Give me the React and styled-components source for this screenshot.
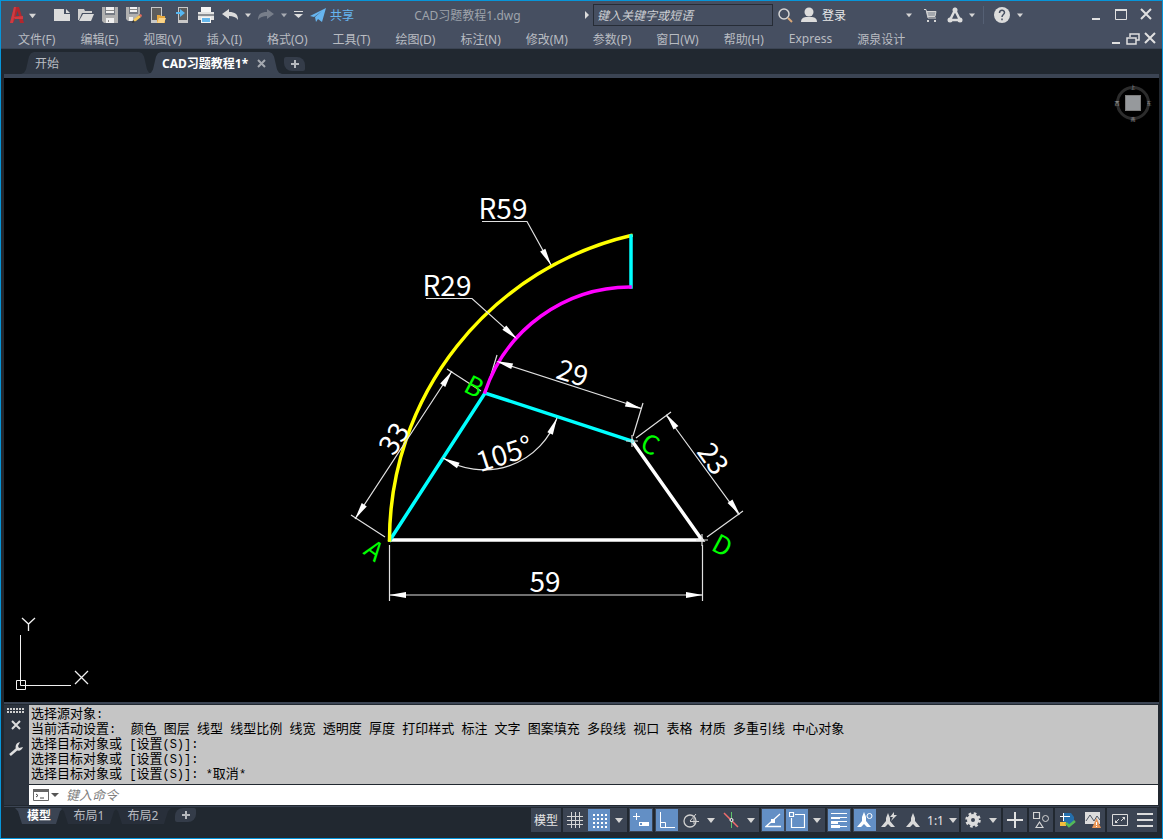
/* eslint-disable react/prop-types */
import { useState } from "react";
import styled, { createGlobalStyle, css } from "styled-components";

const GlobalStyle = createGlobalStyle`
  * {
    box-sizing: border-box;
  }

  body {
    margin: 0;
    background-color: #212830;
    font-family: "Noto Sans", "Noto Sans CJK SC", sans-serif;
    font-size: 12px;
    color: #c3c6cb;
  }

  button,
  input {
    font-family: inherit;
    font-size: inherit;
    font-weight: inherit;
    color: inherit;
  }

  button {
    padding: 0;
    border: none;
    background: none;
    white-space: nowrap;
    cursor: pointer;
  }

  svg {
    display: block;
    flex-shrink: 0;
  }
`;

const Window = styled.div`
  display: flex;
  flex-direction: column;
  min-height: 100vh;
  border: 1px solid #0795d9;
  background-color: #212830;
`;

const TitleBar = styled.header`
  display: flex;
  align-items: center;
  height: 28px;
  padding: 0 4px 0 6px;
  background-color: #464f61;
`;

const ToolButton = styled.button`
  display: flex;
  align-items: center;
  justify-content: center;
  flex-shrink: 0;
  width: ${(props) => props.$width || 24}px;
  height: 24px;
`;

const ShareButton = styled.button`
  display: flex;
  align-items: center;
  gap: 4px;
  margin-left: 4px;
  color: #66b5f0;
`;

const DocumentTitle = styled.div`
  flex: 1;
  color: #9ea3ab;
  font-size: 12px;
  text-align: center;
  white-space: nowrap;
`;

const SearchInput = styled.input`
  width: 180px;
  height: 22px;
  padding: 0 3px;
  border: 1px solid #262c36;
  background-color: #464f61;
  font-style: italic;

  &::placeholder {
    color: #cdd0d4;
    opacity: 1;
  }
`;

const SignInButton = styled.button`
  display: flex;
  align-items: center;
  gap: 5px;
  width: 100px;
  margin-left: 4px;
  color: #e8e8e8;
`;

const Divider = styled.span`
  width: 1px;
  height: 18px;
  margin: 0 6px;
  background-color: #556074;
`;

const WindowButtons = styled.div`
  display: flex;
  align-items: center;
  margin-left: ${(props) => props.$push || "auto"};
`;

const MenuBar = styled.nav`
  display: flex;
  align-items: center;
  gap: 25px;
  height: 20px;
  padding: 0 4px 0 17px;
  border-bottom: 1px solid #3b4453;
  background-color: #464f61;
  color: #b9bcc2;
`;

const Body = styled.main`
  display: flex;
  flex: 1;
  flex-direction: column;
  padding: 0 3px;
`;

const FileTabs = styled.div`
  display: flex;
  align-items: flex-end;
  height: 29px;
  padding-left: 17px;
  border-bottom: 4px solid #3b4453;
`;

const tabShape = css`
  clip-path: polygon(
    0 100%,
    3px 94%,
    5px 80%,
    8px 20%,
    10px 6%,
    13px 0,
    calc(100% - 13px) 0,
    calc(100% - 10px) 6%,
    calc(100% - 8px) 20%,
    calc(100% - 5px) 80%,
    calc(100% - 3px) 94%,
    100% 100%
  );
`;

const FileTab = styled.div`
  display: flex;
  align-items: center;
  gap: 9px;
  width: ${(props) => props.$width}px;
  height: 22px;
  padding-left: 14px;
  margin-right: -4px;
  background-color: ${(props) => (props.$active ? "#3b4453" : "#2f3743")};
  color: ${(props) => (props.$active ? "#ffffff" : "#b9bcc2")};
  font-weight: ${(props) => (props.$active ? 700 : 400)};
  ${tabShape}
`;

const AddTab = styled.button`
  display: flex;
  align-items: center;
  justify-content: center;
  width: 21px;
  height: 14px;
  margin: ${(props) => props.$margin};
  border-radius: ${(props) => props.$radius};
  background-color: #343c49;
`;

const Canvas = styled.section`
  position: relative;
  flex: 1;
  min-height: 500px;
  background-color: #000000;
`;

const Drawing = styled.svg`
  position: absolute;
  inset: 0;
  width: 100%;
  height: 100%;
`;

const CoordinateIcon = styled.svg`
  position: absolute;
  left: 8px;
  bottom: 8px;
`;

const Compass = styled.svg`
  position: absolute;
  top: 3px;
  right: 4px;
`;

const CommandPanel = styled.section`
  display: flex;
  padding: 1px 1px 0 0;
  border-top: 2px solid #3b4453;
`;

const CommandGutter = styled.div`
  display: flex;
  flex-direction: column;
  align-items: center;
  width: 25px;
  padding: 3px 2px 0 0;
  background-color: #2c333e;
`;

const CommandBody = styled.div`
  flex: 1;
`;

const CommandLog = styled.div`
  padding: 2px;
  background-color: #c5c5c5;
  color: #000000;
`;

const LogRow = styled.p`
  height: 15px;
  margin: 0;
  font-family: "Liberation Mono", "Noto Sans CJK SC", monospace;
  font-size: 12px;
  line-height: 15px;
  white-space: pre;
`;

const Han = styled.span`
  font-size: 13px;
  line-height: 15px;
`;

const CommandLine = styled.div`
  display: flex;
  align-items: center;
  height: 20px;
  margin-top: 1px;
  padding-left: 4px;
  background-color: #ffffff;
`;

const CommandInput = styled.input`
  flex: 1;
  height: 20px;
  padding: 0 7px;
  border: none;
  background: none;
  color: #000000;
  font-size: 13px;
  font-style: italic;

  &::placeholder {
    color: #808080;
    opacity: 1;
  }
`;

const StatusBar = styled.footer`
  display: flex;
  align-items: flex-start;
  justify-content: space-between;
  margin-top: 1px;
  padding: 1px 2px 6px 11px;
  border-top: 1px solid #3b4453;
`;

const LayoutTabs = styled.div`
  display: flex;
  align-items: flex-start;
`;

const LayoutTab = styled.button`
  width: ${(props) => (props.$active ? 48 : 56)}px;
  height: 16px;
  margin-right: -2px;
  border-radius: 0 0 6px 6px;
  background-color: ${(props) => (props.$active ? "#3b4453" : "#282f3a")};
  color: ${(props) => (props.$active ? "#ffffff" : "#b9bcc2")};
  font-weight: ${(props) => (props.$active ? 700 : 400)};
  line-height: 16px;
  clip-path: polygon(
    0 0,
    100% 0,
    calc(100% - 3px) 20%,
    calc(100% - 7px) 100%,
    7px 100%,
    3px 20%
  );
`;

const StatusTools = styled.div`
  display: flex;
  gap: 2px;
`;

const StatusGroup = styled.div`
  display: flex;
  align-items: center;
  height: 24px;
  background-color: #3b4453;
`;

const StatusButton = styled.button`
  display: flex;
  align-items: center;
  justify-content: center;
  gap: 5px;
  width: ${(props) => props.$width || 24}px;
  height: 24px;
  border: 1px solid #3b4453;
  background-color: ${(props) => (props.$on ? "#638fc5" : "#3b4453")};
  color: #e6e6e6;
`;

const menus = [
  "文件(F)",
  "编辑(E)",
  "视图(V)",
  "插入(I)",
  "格式(O)",
  "工具(T)",
  "绘图(D)",
  "标注(N)",
  "修改(M)",
  "参数(P)",
  "窗口(W)",
  "帮助(H)",
  "Express",
  "源泉设计",
];

const logLines = [
  "选择源对象:",
  "当前活动设置:  颜色 图层 线型 线型比例 线宽 透明度 厚度 打印样式 标注 文字 图案填充 多段线 视口 表格 材质 多重引线 中心对象",
  "选择目标对象或 [设置(S)]:",
  "选择目标对象或 [设置(S)]:",
  "选择目标对象或 [设置(S)]: *取消*",
];

function App() {
  return (
    <>
      <GlobalStyle />
      <Window>
        <Title />
        <Menu />
        <Body>
          <Files />
          <Canvas>
            <Quadrilateral />
            <Ucs />
            <ViewCompass />
          </Canvas>
          <Command />
          <Status />
        </Body>
      </Window>
    </>
  );
}

function Icon({ size = 16, children }) {
  return (
    <svg width={size} height={size} viewBox={`0 0 ${size} ${size}`} fill="none">
      {children}
    </svg>
  );
}

function Caret({ size = 6, color = "#d5d5d5" }) {
  return (
    <svg width={size} height={size} viewBox="0 0 8 8">
      <path d="M0 2h8L4 7z" fill={color} />
    </svg>
  );
}

function PlusIcon() {
  return (
    <svg width="8" height="8" viewBox="0 0 8 8">
      <path d="M4 0v8M0 4h8" stroke="#b5b8bd" strokeWidth="2" />
    </svg>
  );
}

function Title() {
  const [query, setQuery] = useState("");

  return (
    <TitleBar>
      <ToolButton aria-label="应用程序菜单" $width={19}>
        <Icon size={18}>
          <path
            d="M2 17L6 1h5l5 16h-4l-1-4H7l-2 4zM8 10h3L9.500 5z"
            fill="#b3272d"
            fillRule="evenodd"
          />
          <path d="M2 17L6 1h2L5 17zM5 11l10-1v3H7z" fill="#cf3b41" />
        </Icon>
      </ToolButton>
      <ToolButton aria-label="展开应用程序菜单" $width={12}>
        <Caret size={7} />
      </ToolButton>
      <ToolButton aria-label="新建" $width={36}>
        <svg width="16" height="16" viewBox="-6 0 16 16" overflow="visible">
          <path d="M0 2h10v5h6v7H0z" fill="#dcdcdc" />
          <path d="M12 2l4 4h-4z" fill="#dcdcdc" />
        </svg>
      </ToolButton>
      <ToolButton aria-label="打开">
        <Icon>
          <path d="M0 2h6l1 2h7v2H4L1 13H0z" fill="#d0d0d0" />
          <path d="M5 7h11l-3 7H1z" fill="#dcdcdc" />
        </Icon>
      </ToolButton>
      <ToolButton aria-label="保存">
        <Icon>
          <path d="M0 0h16v16H2l-2-2z" fill="#b0b0b0" />
          <path d="M3 0h10v8H3z" fill="#767b84" />
          <path d="M4 0h8v6H4zM4 11h8v5H4z" fill="#f0f0f0" />
          <path d="M4 3h8v1H4zM6 13h1v2H6z" fill="#8a8a8a" />
        </Icon>
      </ToolButton>
      <ToolButton aria-label="另存为">
        <Icon>
          <path d="M0 0h14v7l-7 7H2l-2-2z" fill="#b0b0b0" />
          <path d="M3 0h9v7H3z" fill="#767b84" />
          <path d="M4 0h7v5H4zM3 10h4v4H3z" fill="#f0f0f0" />
          <path d="M4 2h7v1H4z" fill="#8a8a8a" />
          <path d="M7 15l1-3 5-4 2 2-5 4z" fill="#f7c95b" />
          <path d="M13 8l2-1 1 2-1 1z" fill="#ee6b5d" />
          <path d="M6 16l1-3 2 2z" fill="#333" />
        </Icon>
      </ToolButton>
      <ToolButton aria-label="从移动设备打开">
        <Icon>
          <path d="M1 0h11v16H1z" fill="#c8c8c8" />
          <path d="M2 1h9v12H2z" fill="#5d5d5d" />
          <path d="M7 8h3l1 1h4v7H7z" fill="#e7a83e" />
          <path d="M9 11h7l-2 5H7z" fill="#fbd487" />
        </Icon>
      </ToolButton>
      <ToolButton aria-label="保存到移动设备">
        <Icon>
          <path d="M4 0h10v16H4z" fill="#c8c8c8" />
          <path d="M5 1h8v12H5z" fill="#5d5d5d" />
          <path d="M2 5h4V2l5 4-5 4V7H2z" fill="#55b7f2" />
        </Icon>
      </ToolButton>
      <ToolButton aria-label="打印">
        <Icon>
          <path d="M3 0h10v5H3z" fill="#f4f4f4" />
          <path d="M0 5h16v8H0z" fill="#e2e2e2" />
          <path d="M0 7h16v2H0z" fill="#8c8f94" />
          <path d="M3 10h10v6H3z" fill="#f4f4f4" />
          <path d="M4 11h8v4H4z" fill="#65b7ec" />
        </Icon>
      </ToolButton>
      <ToolButton aria-label="放弃">
        <Icon>
          <path d="M0 7l7-5v3c6 0 9 2 9 8-2-3-5-4-9-4v3z" fill="#dcdcdc" />
        </Icon>
      </ToolButton>
      <ToolButton aria-label="放弃列表" $width={12}>
        <Caret />
      </ToolButton>
      <ToolButton aria-label="重做">
        <Icon>
          <path d="M16 7L9 2v3c-6 0-9 2-9 8 2-3 5-4 9-4v3z" fill="#777e8a" />
        </Icon>
      </ToolButton>
      <ToolButton aria-label="重做列表" $width={12}>
        <Caret color="#a8acb3" />
      </ToolButton>
      <ToolButton aria-label="自定义快速访问工具栏" $width={16}>
        <svg width="9" height="8" viewBox="0 0 9 8">
          <path d="M0 0h9v1H0zM0 3h9L4.500 7z" fill="#dcdcdc" />
        </svg>
      </ToolButton>
      <ShareButton>
        <Icon>
          <path d="M0 9L16 1l-4 14-4-3-2 3-1-5 7-6-8 6z" fill="#66b5f0" />
        </Icon>
        共享
      </ShareButton>
      <DocumentTitle>CAD习题教程1.dwg</DocumentTitle>
      <ToolButton aria-label="展开搜索" $width={12}>
        <svg width="4" height="8" viewBox="0 0 4 8">
          <path d="M0 0l4 4-4 4z" fill="#dcdcdc" />
        </svg>
      </ToolButton>
      <SearchInput
        aria-label="搜索"
        placeholder="键入关键字或短语"
        value={query}
        onChange={(e) => setQuery(e.target.value)}
      />
      <ToolButton aria-label="开始搜索">
        <Icon>
          <circle cx="7" cy="7" r="5" stroke="#d5d5d5" strokeWidth="1.500" />
          <path d="M11 11l4 4" stroke="#d9a878" strokeWidth="2" />
        </Icon>
      </ToolButton>
      <SignInButton>
        <Icon>
          <circle cx="8" cy="5" r="4.500" fill="#dcdcdc" />
          <path d="M0 15c0-4 3-5 6-5h4c3 0 6 1 6 5z" fill="#dcdcdc" />
        </Icon>
        登录
      </SignInButton>
      <ToolButton aria-label="帐户菜单" $width={16}>
        <Caret />
      </ToolButton>
      <ToolButton aria-label="应用商店" $width={26}>
        <Icon>
          <path d="M2 2.500h2l2 8.500h8" stroke="#d5d5d5" />
          <path d="M5 4.500h9l-1 5H6z" fill="#a3a7ae" stroke="#d5d5d5" />
          <path d="M5 13h2v2H5zM12 13h2v2h-2z" fill="#d5d5d5" />
        </Icon>
      </ToolButton>
      <ToolButton aria-label="Autodesk">
        <Icon>
          <path d="M8 3L3 13h10z" stroke="#dcdcdc" strokeWidth="2.500" />
          <circle cx="8" cy="3" r="2.500" fill="#dcdcdc" />
          <circle cx="3" cy="13" r="2.500" fill="#dcdcdc" />
          <circle cx="13" cy="13" r="2.500" fill="#dcdcdc" />
        </Icon>
      </ToolButton>
      <ToolButton aria-label="Autodesk 菜单" $width={10}>
        <Caret />
      </ToolButton>
      <Divider />
      <ToolButton aria-label="帮助">
        <Icon>
          <circle cx="8" cy="8" r="8" fill="#dcdcdc" />
          <path
            d="M5.500 6c0-3.500 5-3.500 5-.5C10.500 7.500 8 7.500 8 10M8 11.500v1.800"
            stroke="#464f61"
            strokeWidth="1.500"
          />
        </Icon>
      </ToolButton>
      <ToolButton aria-label="帮助菜单" $width={12}>
        <Caret />
      </ToolButton>
      <WindowButtons $push="58px">
        <ToolButton aria-label="最小化">
          <Icon>
            <path d="M4 12h8" stroke="#e0e0e0" strokeWidth="2" />
          </Icon>
        </ToolButton>
        <ToolButton aria-label="最大化" $width={26}>
          <Icon>
            <path d="M2.500 3v9.500h11V3" stroke="#e0e0e0" />
            <path d="M2 3h12" stroke="#e0e0e0" strokeWidth="2" />
          </Icon>
        </ToolButton>
        <ToolButton aria-label="关闭">
          <Icon>
            <path d="M3 2l10 10M13 2L3 12" stroke="#e0e0e0" strokeWidth="2" />
          </Icon>
        </ToolButton>
      </WindowButtons>
    </TitleBar>
  );
}

function Menu() {
  return (
    <MenuBar>
      {menus.map((menu) => (
        <button key={menu}>{menu}</button>
      ))}
      <WindowButtons>
        <ToolButton aria-label="最小化图形" $width={16}>
          <Icon>
            <path d="M4 12h8" stroke="#e0e0e0" strokeWidth="2" />
          </Icon>
        </ToolButton>
        <ToolButton aria-label="还原图形" $width={18}>
          <Icon>
            <path
              d="M5 6V3h9v6h-3M2 7h9v6H2z"
              stroke="#e0e0e0"
              strokeWidth="1.500"
            />
          </Icon>
        </ToolButton>
        <ToolButton aria-label="关闭图形" $width={16}>
          <Icon>
            <path d="M3 2l10 10M13 2L3 12" stroke="#e0e0e0" strokeWidth="2" />
          </Icon>
        </ToolButton>
      </WindowButtons>
    </MenuBar>
  );
}

function Files() {
  return (
    <FileTabs>
      <FileTab $width={131}>
        <button>开始</button>
      </FileTab>
      <FileTab $width={134} $active>
        <button>CAD习题教程1*</button>
        <button aria-label="关闭文件">
          <svg width="9" height="9" viewBox="0 0 9 9">
            <path d="M1 1l7 7M8 1L1 8" stroke="#a5a9b0" strokeWidth="2" />
          </svg>
        </button>
      </FileTab>
      <AddTab aria-label="新图形" $margin="0 0 3px 6px" $radius="2px 8px 2px 8px">
        <PlusIcon />
      </AddTab>
    </FileTabs>
  );
}

function Arrow({ x, y, angle }) {
  return (
    <path
      d="M0 0L-17 -3V3z"
      fill="#ffffff"
      transform={`translate(${x} ${y}) rotate(${angle})`}
    />
  );
}

function Label({ x, y, angle = 0, color = "#ffffff", size = 28, children }) {
  return (
    <text
      transform={`translate(${x} ${y}) rotate(${angle})`}
      y="11"
      textAnchor="middle"
      fill={color}
      fontFamily='"Noto Sans CJK SC", sans-serif'
      fontSize={size}
    >
      {children}
    </text>
  );
}

function Quadrilateral() {
  return (
    <Drawing viewBox="4 78 1155 624" fill="none">
      <g strokeWidth="3.500" strokeLinecap="square">
        <path d="M390 540H702L632 441" stroke="#ffffff" />
        <path d="M390 540L485 393L632 441" stroke="#00ffff" />
        <path d="M389.500 540A313 313 0 0 1 631 235.500" stroke="#ffff00" />
        <path d="M631 236V287" stroke="#00ffff" />
      </g>
      <g stroke="#e0e0e0" strokeWidth="1.200">
        <path d="M482 221.500H527L551 265" />
        <path d="M426 298.500H472L517 339" />
        <path d="M389.500 545V601M702.500 545V601M390 595H702" />
        <path d="M351 515L385 537M447 369L481 391M355 519L452 371" />
        <path d="M497 355L487 388M643 403L633 436M498 362L642 408.500" />
        <path d="M636 438L671 412M707 537L743 511M666 415L739 515" />
        <path d="M443 458A77 77 0 0 0 557 418" />
        <path d="M626 441H638M632 435V447M696 540H708M702 534V546" />
      </g>
      <path
        d="M485 392A154 154 0 0 1 630 287"
        stroke="#ff00ff"
        strokeWidth="3.500"
        strokeLinecap="square"
      />
      <Arrow x={551} y={265} angle={61} />
      <Arrow x={517} y={339} angle={42} />
      <Arrow x={389} y={595} angle={180} />
      <Arrow x={703} y={595} angle={0} />
      <Arrow x={355} y={519} angle={123} />
      <Arrow x={452} y={371} angle={-57} />
      <Arrow x={496} y={361} angle={198} />
      <Arrow x={642} y={409} angle={18} />
      <Arrow x={666} y={414} angle={234} />
      <Arrow x={740} y={515} angle={54} />
      <Arrow x={443} y={458} angle={206} />
      <Arrow x={557} y={418} angle={-66} />
      <Label x={503} y={208}>R59</Label>
      <Label x={447} y={285}>R29</Label>
      <Label x={545} y={581}>59</Label>
      <Label x={573} y={372} angle={18}>29</Label>
      <Label x={393} y={438} angle={-57}>33</Label>
      <Label x={714} y={458} angle={54}>23</Label>
      <Label x={504} y={453} angle={-18}>105°</Label>
      <Label x={375} y={549} angle={36} color="#00ff00" size={26}>A</Label>
      <Label x={475} y={385} angle={28} color="#00ff00" size={26}>B</Label>
      <Label x={651} y={443} angle={26} color="#00ff00" size={26}>C</Label>
      <Label x={723} y={544} angle={28} color="#00ff00" size={26}>D</Label>
    </Drawing>
  );
}

function Ucs() {
  return (
    <CoordinateIcon width="84" height="80" viewBox="0 0 84 80" fill="none">
      <g stroke="#f0f0f0">
        <path d="M8.500 21V71.500H59" />
        <path d="M4.500 66.500h9v9h-9z" />
        <path
          d="M10 4l6.500 6L23 4M16.500 10v7M63 57l13 13M76 57L63 70"
          strokeWidth="1.300"
        />
      </g>
    </CoordinateIcon>
  );
}

function ViewCompass() {
  return (
    <Compass width="44" height="44" viewBox="0 0 44 44">
      <circle cx="22" cy="22" r="15.500" stroke="#2c2c2c" strokeWidth="3" fill="none" />
      <rect x="14.500" y="14.500" width="15" height="15" fill="#96999c" stroke="#7d7d7d" />
      <g
        fill="#a8a8a8"
        fontFamily='"Noto Sans CJK SC", sans-serif'
        fontSize="5"
        textAnchor="middle"
      >
        <text x="22" y="8">上</text>
        <text x="38" y="24">东</text>
        <text x="22" y="40">南</text>
        <text x="6" y="24">西</text>
      </g>
    </Compass>
  );
}

function LogLine({ text }) {
  return (
    <LogRow>
      {text
        .split(/([\u4e00-\u9fff]+)/)
        .map((part, i) => (i % 2 ? <Han key={i}>{part}</Han> : part))}
    </LogRow>
  );
}

function Command() {
  const [command, setCommand] = useState("");

  return (
    <CommandPanel>
      <CommandGutter>
        <svg width="17" height="5" viewBox="0 0 17 5">
          <path
            d="M0 1h17M0 4h17"
            stroke="#d0d0d0"
            strokeWidth="2"
            strokeDasharray="2 1"
          />
        </svg>
        <ToolButton aria-label="关闭命令行">
          <svg width="10" height="10" viewBox="0 0 10 10">
            <path d="M1 1l8 8M9 1L1 9" stroke="#dcdcdc" strokeWidth="2" />
          </svg>
        </ToolButton>
        <ToolButton aria-label="自定义">
          <Icon>
            <path d="M2 14l7-6" stroke="#e0e0e0" strokeWidth="2.500" />
            <path
              d="M12 1C8 2 7 5 8 8c1 2 5 3 7-2l-4 1-1-2z"
              fill="#e0e0e0"
            />
          </Icon>
        </ToolButton>
      </CommandGutter>
      <CommandBody>
        <CommandLog>
          {logLines.map((line, i) => (
            <LogLine key={i} text={line} />
          ))}
        </CommandLog>
        <CommandLine>
          <button aria-label="最近使用的命令">
            <svg width="26" height="12" viewBox="0 0 26 12" fill="none">
              <path d="M.5 1h15v10.500H.5z" stroke="#666" />
              <path d="M0 0h16v3H0z" fill="#666" />
              <path d="M3 5l2 1.500L3 8M7 9h4" stroke="#444" />
              <path d="M18 4h8l-4 4z" fill="#555" />
            </svg>
          </button>
          <CommandInput
            aria-label="命令"
            placeholder="键入命令"
            value={command}
            onChange={(e) => setCommand(e.target.value)}
          />
        </CommandLine>
      </CommandBody>
    </CommandPanel>
  );
}

function StatusCaret({ label }) {
  return (
    <StatusButton aria-label={label} $width={16}>
      <Caret size={8} />
    </StatusButton>
  );
}

function Status() {
  return (
    <StatusBar>
      <LayoutTabs>
        <LayoutTab $active>模型</LayoutTab>
        <LayoutTab>布局1</LayoutTab>
        <LayoutTab>布局2</LayoutTab>
        <AddTab aria-label="新建布局" $margin="0 0 0 6px" $radius="8px 2px 8px 2px">
          <PlusIcon />
        </AddTab>
      </LayoutTabs>
      <StatusTools>
        <StatusGroup>
          <StatusButton $width={30}>模型</StatusButton>
        </StatusGroup>
        <StatusGroup>
          <StatusButton aria-label="栅格">
            <Icon>
              <path
                d="M4.500 0v16M8.500 0v16M12.500 0v16M0 4.500h16M0 8.500h16M0 12.500h16"
                stroke="#d5d5d5"
              />
            </Icon>
          </StatusButton>
          <StatusButton aria-label="捕捉模式" $on>
            <Icon>
              <path
                d="M2 3h14M2 7h14M2 11h14M2 15h14"
                stroke="#ffffff"
                strokeWidth="2"
                strokeDasharray="2 2"
              />
            </Icon>
          </StatusButton>
          <StatusCaret label="捕捉设置" />
        </StatusGroup>
        <StatusGroup>
          <StatusButton aria-label="动态输入" $on>
            <Icon>
              <path d="M3.500 1v7M0 4.500h7" stroke="#ffffff" />
              <path d="M6 10h10v4H6z" fill="#ffffff" />
              <path d="M7 11h2v2H7z" fill="#638fc5" />
            </Icon>
          </StatusButton>
        </StatusGroup>
        <StatusGroup>
          <StatusButton aria-label="正交模式" $on>
            <Icon>
              <path d="M1.500 0v15.500H16M1.500 10.500h5v5" stroke="#ffffff" />
            </Icon>
          </StatusButton>
          <StatusButton aria-label="极轴追踪">
            <Icon>
              <circle cx="7" cy="9" r="6" stroke="#d0d0d0" strokeWidth="1.300" />
              <path d="M7 9.500h9M7 9l6-7M11 6v6" stroke="#d0d0d0" />
            </Icon>
          </StatusButton>
          <StatusCaret label="极轴设置" />
          <StatusButton aria-label="等轴测草图">
            <Icon>
              <path d="M1 1l14 14" stroke="#f06c6c" strokeWidth="1.500" />
              <path d="M8.500 0v16" stroke="#5ec46c" />
              <circle cx="8.500" cy="8" r="1.500" fill="#3b4453" stroke="#ffffff" />
            </Icon>
          </StatusButton>
          <StatusCaret label="等轴测设置" />
        </StatusGroup>
        <StatusGroup>
          <StatusButton aria-label="对象捕捉追踪" $on>
            <Icon>
              <path d="M15 2L1 14.500h15" stroke="#ffffff" strokeWidth="1.300" />
              <path d="M6 7h4v4H6z" fill="#ffffff" />
            </Icon>
          </StatusButton>
          <StatusButton aria-label="对象捕捉" $on>
            <Icon>
              <path
                d="M.5.500h4v4h-4zM6 2.500h9.500v13h-13V6"
                stroke="#ffffff"
                strokeWidth="1.200"
              />
            </Icon>
          </StatusButton>
          <StatusCaret label="对象捕捉设置" />
        </StatusGroup>
        <StatusGroup>
          <StatusButton aria-label="线宽" $on>
            <Icon>
              <path d="M0 1.500h16M0 5.500h16M0 9.500h16M0 14.500h16" stroke="#ffffff" />
              <path d="M0 5h9v2H0zM0 9h7v3H0zM0 13h9v3H0z" fill="#ffffff" />
            </Icon>
          </StatusButton>
        </StatusGroup>
        <StatusGroup>
          <StatusButton aria-label="注释可见性" $on>
            <Icon>
              <path
                d="M7 0l2 5v4l5 6H10L7 12l-3 3H0l5-6V5z"
                fill="#ffffff"
              />
              <circle cx="12.500" cy="4" r="2.500" stroke="#ffffff" />
            </Icon>
          </StatusButton>
          <StatusButton aria-label="自动缩放">
            <Icon>
              <path d="M7 1l2 5v3l5 6H10L7 12l-3 3H0l5-6V6z" fill="#d9d9d9" />
              <path d="M13 0l-4 5h3l-2 4 6-6h-3z" fill="#d9d9d9" />
            </Icon>
          </StatusButton>
          <StatusButton aria-label="注释比例图标">
            <Icon>
              <path d="M8 1l2 5v3l5 6h-4l-3-3-3 3H1l5-6V6z" fill="#d9d9d9" />
            </Icon>
          </StatusButton>
          <StatusButton $width={34}>
            1:1
            <Caret size={8} />
          </StatusButton>
        </StatusGroup>
        <StatusGroup>
          <StatusButton aria-label="切换工作空间">
            <Icon>
              <circle cx="8" cy="8" r="4" stroke="#dcdcdc" strokeWidth="4" />
              <circle
                cx="8"
                cy="8"
                r="6.500"
                stroke="#dcdcdc"
                strokeWidth="2.500"
                strokeDasharray="2.600 2.500"
              />
            </Icon>
          </StatusButton>
          <StatusCaret label="工作空间菜单" />
        </StatusGroup>
        <StatusGroup>
          <StatusButton aria-label="注释监视器">
            <Icon>
              <path d="M8 0v16M0 8h16" stroke="#e0e0e0" strokeWidth="2" />
            </Icon>
          </StatusButton>
        </StatusGroup>
        <StatusGroup>
          <StatusButton aria-label="隔离对象">
            <Icon>
              <path
                d="M.5.500h6v6h-6zM6.500 10l3.500 5.500H3z"
                stroke="#d5d5d5"
                strokeWidth="1.200"
              />
              <circle cx="12.500" cy="6.500" r="3" stroke="#d5d5d5" />
            </Icon>
          </StatusButton>
        </StatusGroup>
        <StatusGroup>
          <StatusButton aria-label="硬件加速" $width={25}>
            <Icon>
              <path d="M3 1h8l3 4v7H3z" fill="#246fad" />
              <path d="M0 4.500h10M3.500 1v8" stroke="#ffffff" />
              <path d="M0 10h6v4H0z" fill="#f3bd3c" />
              <path d="M6 11l3 3 6-5" stroke="#54b957" strokeWidth="2.500" />
            </Icon>
          </StatusButton>
          <StatusButton aria-label="性能" $width={25}>
            <Icon>
              <path d="M0 0h15v12H0z" fill="#dcdcdc" />
              <path d="M1 9l4-6 4 6 3-5 3 4" stroke="#4e5663" />
              <path d="M11.500 6L16 16H7z" fill="#e89657" />
              <path d="M11.500 10v3M11.500 14v1" stroke="#ffffff" />
            </Icon>
          </StatusButton>
        </StatusGroup>
        <StatusGroup>
          <StatusButton aria-label="全屏显示" $width={25}>
            <Icon>
              <path d="M.5 2.500h15v11H.5z" stroke="#dcdcdc" />
              <path d="M10 5h3v3zM3 8v3h3z" fill="#dcdcdc" />
              <path d="M9 9l3-3M4 10l3-3" stroke="#dcdcdc" />
            </Icon>
          </StatusButton>
          <StatusButton aria-label="自定义状态栏" $width={25}>
            <Icon>
              <path
                d="M0 2h16M0 8h16M0 14h16"
                stroke="#dcdcdc"
                strokeWidth="2"
              />
            </Icon>
          </StatusButton>
        </StatusGroup>
      </StatusTools>
    </StatusBar>
  );
}

export default App;
